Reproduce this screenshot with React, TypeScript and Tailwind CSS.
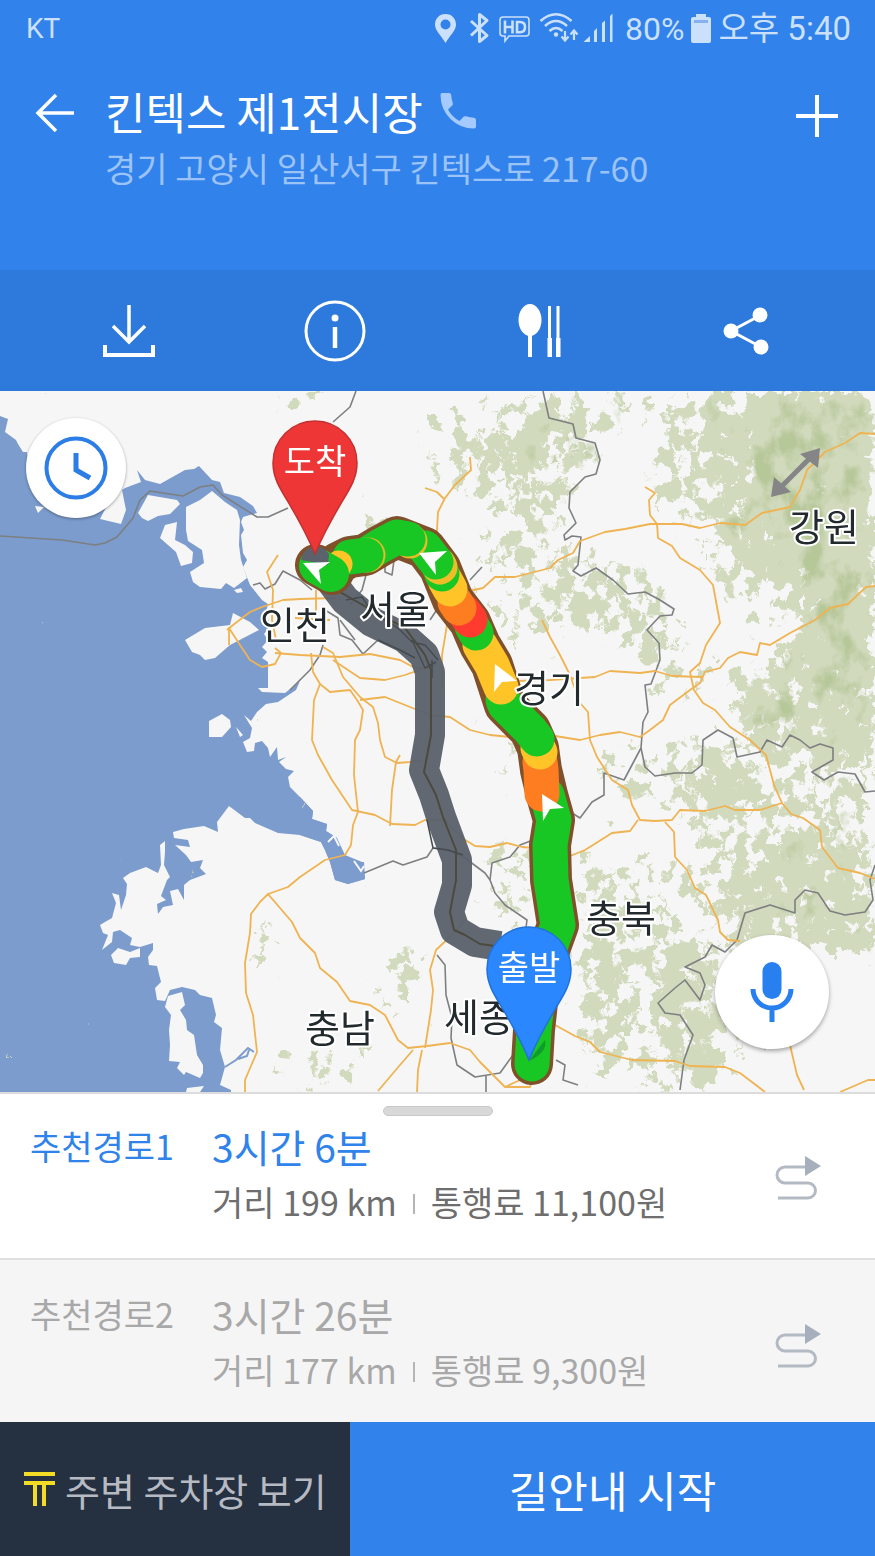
import React from "react";

const LAND = [
  "0,391 0,416 8,419 5,432 16,440 18,444 23,452 27,452 30,480 60,505 100,505 125,488 141,482 137,470 145,480 160,484 185,470 194,469 199,466 212,480 220,482 224,493 240,497 253,506 257,513 243,517 241,522 244,530 241,535 243,553 247,560 243,567 250,585 262,600 268,604 266,612 270,626 264,634 268,640 262,647 267,652 262,658 268,662 268,688 258,688 262,692 285,693 300,681 296,690 278,702 266,704 257,712 251,721 244,715 252,728 250,738 243,742 247,752 254,751 255,743 262,741 268,748 270,757 277,747 278,760 286,757 279,762 286,769 294,771 288,777 290,787 300,797 313,811 312,819 327,824 326,831 337,838 345,855 362,862 365,879 348,884 335,880 330,862 325,850 321,842 300,835 278,833 255,823 250,818 245,818 229,806 217,822 218,832 204,826 184,829 173,832 174,838 188,840 190,847 175,845 186,855 191,862 203,860 200,868 206,874 190,880 184,885 184,900 178,889 170,891 173,905 163,907 158,914 157,904 166,900 161,896 167,880 170,877 164,865 165,852 165,841 160,845 161,865 158,873 146,867 130,873 123,878 127,884 126,895 121,910 119,895 112,893 116,903 112,918 105,922 100,925 103,933 108,935 102,950 112,942 113,932 120,930 132,938 130,945 140,947 153,943 153,950 148,957 149,965 157,966 161,982 155,988 157,1000 165,1001 170,990 182,987 195,990 200,995 212,998 216,1015 214,1022 222,1028 220,1050 225,1067 220,1085 231,1090 231,1092 875,1092 875,391",
  "111,955 118,948 130,952 140,948 140,957 130,958 126,965 114,963",
  "168,996 182,992 185,1005 180,1010 186,1020 187,1030 194,1035 197,1055 203,1065 203,1073 200,1078 186,1072 184,1075 177,1068 180,1062 169,1061 170,1045 169,1030 171,1015 165,1007",
  "186,507 200,500 212,491 225,502 237,510 240,520 239,545 241,560 247,578 238,585 234,588 226,583 221,589 200,587 193,582 190,572 204,563 202,550 188,541 186,530",
  "138,513 148,495 177,500 180,504 170,514 158,516 148,521 142,518",
  "165,525 177,522 175,540 185,545 193,552 192,563 181,566 176,552 160,538",
  "100,519 120,480 126,510 121,524",
  "185,640 205,628 230,625 233,613 250,622 259,630 230,645 215,658 205,660 200,655 192,652",
  "209,721 222,714 230,720 231,727 222,737 209,737",
  "234,590 241,588 243,592 237,593",
  "35,506 44,507 38,513",
  "187,1088 204,1086 200,1092 186,1092",
  "236,727 243,735 240,737",
];

const BAY = "300,797 313,811 312,819 327,824 326,831 337,838 340,857 350,862 364,862 365,879 348,884 335,880 330,862 325,850 321,842 300,835";

// density of the mountain cover, [points, opacity]
const HILLS: [string, number][] = [
  ["700,391 875,391 875,770 745,735 728,690 790,640 805,600 750,560 700,520 725,470 700,430", 0.62],
  ["760,391 875,391 875,740 830,700 800,560 750,500", 0.5],
  ["530,391 660,391 620,425 590,480 560,530 525,540 520,440", 0.45],
  ["530,400 580,400 570,430 545,455 528,440", 0.35],
  ["555,540 640,560 690,610 665,670 600,640 550,610", 0.44],
  ["555,590 600,590 600,620 560,620", 0.4],
  ["650,400 720,400 720,470 690,540 650,500", 0.48],
  ["690,540 760,530 800,600 770,640 720,600", 0.4],
  ["640,650 700,640 760,680 700,700 650,700", 0.3],
  ["600,740 720,740 760,810 660,820 600,800", 0.38],
  ["700,740 875,740 875,960 740,930 700,880 690,800", 0.44],
  ["730,880 790,830 875,860 875,960 720,950", 0.4],
  ["580,880 680,920 720,960 720,1092 640,1092 580,1040", 0.42],
  ["650,930 760,940 770,1060 690,1092 660,1010", 0.35],
  ["570,850 700,850 720,930 640,910 590,930", 0.36],
  ["570,940 620,940 620,1092 580,1092", 0.3],
  ["480,840 540,840 535,930 490,920", 0.4],
  ["380,950 420,940 415,1020 385,1020", 0.46],
  ["330,1050 375,1020 365,1092 330,1092", 0.38],
  ["410,400 525,400 530,480 440,500", 0.34],
  ["470,540 560,540 570,640 500,650", 0.36],
  ["460,440 530,430 540,560 490,560", 0.34],
  ["505,740 530,740 520,800 500,790", 0.42],
  ["275,385 325,385 305,415 255,410", 0.46],
  ["360,515 398,515 398,560 378,560", 0.7],
  ["252,925 280,925 275,985 250,980", 0.46],
  ["285,1075 325,1045 330,1092 285,1092", 0.42],
  ["270,1045 295,1045 285,1070 272,1068", 0.6],
];

const ROADS = [
  "470,457 471,470 455,485 445,498 438,512 437,530 433,545",
  "425,488 437,492 444,499",
  "465,592 483,588 495,577 515,577 550,568 558,560 573,553 580,541 605,532 625,529 650,524 682,524 700,528 720,523 745,525 762,513 790,507 800,490 807,470 825,452 845,443 860,433 875,434",
  "645,487 655,493 649,500 650,515 657,524 658,538 672,546 680,558 700,570 713,585 720,623 706,645 700,663 690,672 694,690 703,703 715,710 730,727 750,740 766,755 774,785 782,803 791,814 803,818 820,830 822,847 838,868 860,873 875,879",
  "875,586 866,587 848,604 830,608 815,620 790,633 770,645 760,643 757,655 740,652 728,658 720,668 705,672 700,683 690,690 670,705 663,720 650,730 640,737 620,732 600,735 580,740 555,736",
  "515,681 550,680 595,677 610,671 640,673 655,671 672,676 702,677",
  "542,620 550,637 560,655 570,675 580,703 588,712 590,740 597,757 612,780 628,790 632,805 640,820 655,821 672,820 680,810 705,811 725,806 735,810 760,810 782,803",
  "570,856 585,850 612,833 630,831 638,820",
  "665,822 674,832 675,857 687,870 695,888 706,895 718,920 720,932 728,940 740,941",
  "555,1025 575,1036 590,1042 600,1052 632,1060 675,1061 690,1066 725,1067 740,1073 765,1092",
  "790,1045 797,1075 804,1090",
  "840,1092 868,1080 875,1080",
  "268,894 288,887 300,877 325,860 345,855 351,845 353,825 358,812 354,775 355,740 360,730 363,710 357,700 350,690 330,692 320,684",
  "245,1092 245,1080 257,1052 253,1015 246,993 245,963 250,933 251,914 260,902 268,894 292,922 300,938 315,953 320,968 337,982 350,1001 370,1005 385,1015 398,1040 408,1048 427,1046 450,1043 470,1050 480,1062 490,1072 505,1087 520,1080",
  "505,1087 530,1087 532,1080",
  "425,1048 431,1010 433,990 430,970 436,950 452,935 465,920",
  "413,1050 400,1065 378,1091",
  "422,1050 418,1070 417,1092",
  "311,653 313,672 320,684 314,700 312,740 318,755 332,780 352,810 375,815 392,824 415,825 425,820 445,820 462,838 475,846 490,847 507,843 522,847 533,848",
  "390,826 392,790 396,762 400,755",
  "380,740 385,757 397,763 410,762 425,760",
  "323,647 333,653 343,677 360,697 373,707 378,723 380,740",
  "275,653 300,655 340,657 370,654 400,660 415,668 430,668",
  "333,660 360,678 385,680 405,675 425,668",
  "360,700 385,697 410,707 430,715 450,717 470,730 490,735 510,737",
  "227,630 233,625 250,612 262,607 283,600 300,599 335,598",
  "278,555 267,572 273,590 272,620 276,640",
  "229,645 229,628 240,645 250,660 262,667 275,664 281,653 275,648",
  "442,690 442,655 447,625 455,610",
  "295,618 330,620",
  "316,590 316,615",
];

const BORDERS = [
  "0,536 62,540 95,545 105,543 117,537 133,518 140,500 150,491 183,496 200,487 213,485 222,495 257,517 268,517 288,508",
  "356,391 350,407 333,422",
  "543,391 549,418 573,424 576,438 595,443 600,460 596,474 585,477 570,492 569,508 576,523 564,535 565,540 572,536 581,537 578,565 573,571 581,576 596,568 613,580 628,594 645,592 660,600 674,609 672,615 660,616 647,630 659,643 660,660 651,684 645,685 648,712 643,722 641,748 624,780 604,773 604,795 592,802 580,818 572,813",
  "641,748 645,767 655,776 675,773 692,773 702,765 703,740 718,730 733,738 737,757 760,752 767,740 782,747 790,735 800,740 810,748 820,744 833,748 833,760 812,772 824,780 838,772 855,774 865,792 875,791",
  "875,865 870,880 873,900 865,912 845,915 830,911 818,893 805,890 795,900 795,913 770,905 745,913 737,940 725,952 712,945 705,957 685,967 700,973 705,985 700,1000 685,980 675,988 658,1003 665,1013 680,1015 693,1035 684,1060 680,1090",
  "364,873 393,861 403,865 427,857 433,848 448,850 465,858 485,873 490,880 495,893 505,905 527,920 525,935",
  "490,880 492,863 510,857 520,845 533,840",
  "437,955 445,965 446,995 452,1018 451,1038 457,1065 475,1077 500,1073 513,1055",
  "486,1076 486,1092",
  "556,1060 565,1065 563,1080 578,1085",
  "253,585 260,583 265,589 275,584 283,571 300,580 312,590",
  "323,645 320,655 310,670 290,690",
  "325,610 338,618 340,635 352,640 363,654 378,640",
  "350,605 362,590 366,575 366,560",
  "385,560 385,572 392,575 394,560",
  "340,620 355,640",
  "430,620 440,605 445,590 430,575",
  "470,580 482,567",
];

const ROUTE =
  "M532 1064 L534 1030 L540 975 L558 925 L551 880 L550 845 L554 820 L547 795 L541 770 L538 748 L530 730 L505 705 L492 665 L480 645 L470 622 L453 600 L440 568 L425 548 L397 537 L380 546 L365 555 L350 557 L338 563 L332 574 L316 565";

const SEGMENTS: [string, string][] = [
  ["M532 1064 L534 1030 L540 975 L558 925 L551 880 L550 845 L554 820 L547 795", "#18c724"],
  ["M542 794 L541 770 L540 762", "#ff7d21"],
  ["M540 752 L538 748", "#ffc528"],
  ["M537 739 L530 730 L505 705 L503 700", "#18c724"],
  ["M501 687 L492 665 L480 645", "#ffc528"],
  ["M476 633 L472 626", "#18c724"],
  ["M470 620 L464 612", "#ff3b30"],
  ["M459 608 L455 602", "#ff7d21"],
  ["M450 589 L445 580", "#ffc528"],
  ["M442 574 L439 566", "#18c724"],
  ["M440 567 L438 564", "#f0bd28"],
  ["M436 562 L425 548", "#18c724"],
  ["M410 541 L409 540", "#e6bc28"],
  ["M408 539 L397 537 L380 546 L369 553", "#18c724"],
  ["M368 555 L367 555", "#e6bc28"],
  ["M366 555 L350 557", "#18c724"],
];

const ARROWS = [
  "303,563 330,562 319,570 321,584",
  "419,553 447,551 435,562 436,575",
  "495,664 517,681 502,682 494,692",
  "542,794 564,808 550,809 543,821",
];

const REGIONS = [
  { name: "인천", x: 260, y: 639 },
  { name: "서울", x: 360, y: 623 },
  { name: "경기", x: 514, y: 702 },
  { name: "강원", x: 789, y: 541 },
  { name: "충북", x: 586, y: 932 },
  { name: "충남", x: 305, y: 1042 },
  { name: "세종", x: 444, y: 1031 },
];

const Pin = ({ x, y, fill, edge, label }: { x: number; y: number; fill: string; edge: string; label: string }) => (
  <g transform={`translate(${x} ${y})`}>
    <path
      d="M0 0 C-9 -22 -18 -37 -28 -54 C-36 -67 -42 -77 -42 -91 A42 42 0 0 1 42 -91 C42 -77 36 -67 28 -54 C18 -37 9 -22 0 0 Z"
      fill={fill}
      stroke={edge}
      strokeWidth="1.5"
    />
    <text y="-80" textAnchor="middle" fontSize="34" fill="#fff">
      {label}
    </text>
  </g>
);

const RouteMap = () => (
  <svg
    viewBox="0 391 875 701"
    className="block w-full"
    role="img"
    aria-label="경로 지도"
    fontFamily='"Noto Sans CJK KR", sans-serif'
  >
    <defs>
      <filter id="cover" filterUnits="userSpaceOnUse" x="0" y="391" width="875" height="701" colorInterpolationFilters="sRGB">
        <feGaussianBlur in="SourceAlpha" stdDeviation="10" result="density" />
        <feTurbulence type="fractalNoise" baseFrequency="0.075 0.06" numOctaves="5" seed="7" result="noise" />
        <feComposite in="density" in2="noise" operator="arithmetic" k1="0" k2="0.9" k3="1" k4="-0.4" result="sum" />
        <feColorMatrix in="sum" values="0 0 0 0 0.82  0 0 0 0 0.855  0 0 0 0 0.74  0 0 0 18 -8.6" result="flat" />
        <feTurbulence type="fractalNoise" baseFrequency="0.12" numOctaves="2" seed="3" result="jag" />
        <feDisplacementMap in="flat" in2="jag" scale="14" xChannelSelector="R" yChannelSelector="G" />
      </filter>
      <filter id="ridge" filterUnits="userSpaceOnUse" x="0" y="391" width="875" height="701" colorInterpolationFilters="sRGB">
        <feGaussianBlur in="SourceAlpha" stdDeviation="14" result="density" />
        <feTurbulence type="fractalNoise" baseFrequency="0.04 0.03" numOctaves="5" seed="21" result="noise" />
        <feComposite in="density" in2="noise" operator="arithmetic" k1="0" k2="0.6" k3="1" k4="-0.45" />
        <feColorMatrix values="0 0 0 0 0.69  0 0 0 0 0.76  0 0 0 0 0.56  0 0 0 4 -1.9" />
      </filter>
    </defs>

    <rect y="391" width="875" height="701" fill="#7b9ccd" />
    {LAND.map((p) => (
      <polygon key={p} points={p} fill="#f6f6f6" />
    ))}
    <polygon points={BAY} fill="#7b9ccd" />
    <path d="M328 842 L334 836 L339 846 M354 861 L361 871 L364 866" fill="none" stroke="#f6f6f6" strokeWidth="2" />
    <path d="M225 1067 L236 1060 L248 1048 L254 1052 M238 1059 L247 1056 L249 1050" fill="none" stroke="#7b9ccd" strokeWidth="2" />

    <g filter="url(#cover)">
      {HILLS.map(([p, o]) => (
        <polygon key={p} points={p} opacity={o} />
      ))}
    </g>
    <g filter="url(#ridge)" opacity="0.8">
      {HILLS.slice(0, 5).map(([p, o]) => (
        <polygon key={p} points={p} opacity={o} />
      ))}
      <polygon points="760,850 875,780 875,950 740,930" opacity="0.5" />
      <polygon points="660,940 750,950 740,1040 670,1010" opacity="0.3" />
    </g>

    <g fill="none" stroke="#7d7f80" strokeWidth="1.6" strokeLinejoin="round">
      {BORDERS.map((p) => (
        <polyline key={p} points={p} />
      ))}
    </g>
    <g fill="none" stroke="#efb351" strokeWidth="1.8" strokeLinejoin="round">
      {ROADS.map((p) => (
        <polyline key={p} points={p} />
      ))}
    </g>

    <g fill="none" strokeLinejoin="round">
      <path
        d="M330 580 L345 600 L372 622 L405 638 L424 655 L430 672 L430 735 L424 770 L434 795 L441 817 L457 860 L457 885 L449 912 L455 930 L475 942 L500 946"
        stroke="#5b626c"
        strokeWidth="30"
        opacity="0.96"
      />
      <path
        d="M340 592 L375 612 L405 628 L425 655 L431 670 L431 735 L424 772 L436 795 L443 817 L456 850 L456 880 L450 912 L454 930 L465 935 L480 944 L495 946"
        stroke="#4b4a3d"
        strokeWidth="2"
      />
      <path
        d="M346 600 L362 597 L372 612 L398 628 L412 642 L425 645 L438 660 M378 640 L400 650 L415 658 M412 640 L425 668 L436 662 M432 660 L432 678"
        stroke="#464b4e"
        strokeWidth="1.5"
      />
      <path d="M427 820 L433 848 L448 850 L463 855" stroke="#464b4e" strokeWidth="1.5" />
    </g>

    <g fill="none" strokeLinecap="round" strokeLinejoin="round">
      <path d={ROUTE} stroke="#80502a" strokeWidth="42" />
      {SEGMENTS.map(([d, color]) => (
        <path key={d} d={d} stroke={color} strokeWidth="35" />
      ))}
      <path d="M339 564 L334 572" stroke="#ffc528" strokeWidth="27" />
      <path d="M331 574 L317 566" stroke="#18c724" strokeWidth="36" />
    </g>
    <path d="M301 560 A15 15 0 0 1 329 554 L328 565 Z" fill="#5b626c" />
    {ARROWS.map((p) => (
      <polygon key={p} points={p} fill="#fff" />
    ))}
    <path d="M529 1061 L545 1040 Q548 1052 529 1061 Z" fill="#0c7d2f" opacity="0.6" />

    <g fill="#222a2d" stroke="#fff" strokeWidth="4" paintOrder="stroke" strokeLinejoin="round" fontSize="38">
      {REGIONS.map((r) => (
        <text key={r.name} x={r.x} y={r.y}>
          {r.name}
        </text>
      ))}
    </g>

    <Pin x={315} y={554} fill="#ee3636" edge="#c33030" label="도착" />
    <Pin x={529} y={1060} fill="#2a87fd" edge="#2272dc" label="출발" />
  </svg>
);

const StatusIcons = () => (
  <svg width="184" height="34" viewBox="430 12 184 34" className="shrink-0" fill="#cbe0fb" aria-hidden="true">
    <path fillRule="evenodd" d="M441.500 14 C435 14 431 19 431 24.500 C431 31 437 35 441.500 43 C446 35 452 31 452 24.500 C452 19 448 14 441.500 14 Z M441.500 19.500 a5 5 0 1 1 0 10 a5 5 0 1 1 0 -10 Z" />
    <path d="M467 21 L483 35.500 L475.500 41.500 V14.500 L483 20.500 L467 35.500" fill="none" stroke="#cbe0fb" strokeWidth="3" strokeLinejoin="round" />
    <path d="M499 17 H522 Q525 17 525 20 V33 Q525 36 522 36 H505 L501 41 V36 H499 Q496 36 496 33 V20 Q496 17 499 17 Z" fill="none" stroke="#cbe0fb" strokeWidth="1.6" />
    <path d="M501 20.500 V33.500 M508.500 20.500 V33.500 M501 27 H508.500 M513 22 V32.200 H516 Q521 32.200 521 27 Q521 22 516 22 Z" fill="none" stroke="#cbe0fb" strokeWidth="2.600" />
    <g fill="none" stroke="#cbe0fb" strokeWidth="2.600">
      <path d="M536.500 21 Q552 7.500 567.500 21" />
      <path d="M541 26 Q552 16 563 26" />
      <path d="M545.500 31 Q552 25 558.500 31" />
      <path d="M561 31 V40 M557.500 36.500 L561 40.500 L564.500 36.500 M570 40 V31 M566.500 34.500 L570 30.500 L573.500 34.500" strokeWidth="2.200" />
    </g>
    <circle cx="552" cy="34.500" r="2.200" />
    <path d="M579.500 42 L586 36 V42 Z M590 42 V31 L593 28 V42 Z M598 42 V23 L601 20.500 V42 Z M606 42 V16 L608.500 13.500 V42 Z" />
  </svg>
);

const BackIcon = () => (
  <svg width="42" height="42" viewBox="0 0 42 42" fill="none" stroke="#fff" strokeWidth="3.500">
    <path d="M40 21 H4 M22 3 L4 21 L22 39" />
  </svg>
);

const PhoneIcon = () => (
  <svg width="38" height="38" viewBox="0 0 38 38" fill="#a5caff">
    <path d="M3 1 H10 Q12 1 12.200 3 Q12.500 7.500 13.800 11 Q14.300 12.500 13.200 13.600 L9 17.500 Q13 25 20.500 29 L24.500 24.800 Q25.600 23.800 27 24.300 Q31 25.600 35 25.800 Q37 26 37 28 V34.500 Q37 36.500 35 36.500 Q21 36.500 11.500 27 Q1.500 17 1.500 3 Q1.500 1 3 1 Z" />
  </svg>
);

const PlusIcon = () => (
  <svg width="42" height="42" viewBox="0 0 42 42" fill="none" stroke="#fff" strokeWidth="4">
    <path d="M0 21 H42 M21 0 V42" />
  </svg>
);

const DownloadIcon = () => (
  <svg width="52" height="54" viewBox="0 0 52 54" fill="none" stroke="#fff">
    <path d="M26 1 V38 M10 22 L26 38 L42 22" strokeWidth="3.500" />
    <path d="M2 41 V51 H50 V41" strokeWidth="4" />
  </svg>
);

const InfoIcon = () => (
  <svg width="62" height="62" viewBox="0 0 62 62" fill="none" stroke="#fff">
    <circle cx="31" cy="31" r="29" strokeWidth="3" />
    <circle cx="31" cy="18" r="3.500" fill="#fff" stroke="none" />
    <path d="M31 27 V48" strokeWidth="4.500" />
  </svg>
);

const FoodIcon = () => (
  <svg width="44" height="54" viewBox="0 0 44 54" fill="#fff">
    <ellipse cx="12" cy="16" rx="11.500" ry="16" />
    <path d="M10 30 H14 V53 H10 Z M30 2 H33 V34 H34 V53 H29.500 V34 H30 Z M38.500 2 H41.500 V34 H42.500 V53 H38 V34 H38.500 Z" />
  </svg>
);

const ShareIcon = () => (
  <svg width="46" height="48" viewBox="0 0 46 48" fill="#fff">
    <path d="M38 8 L8 24 L38 40" fill="none" stroke="#fff" strokeWidth="3" />
    <circle cx="37" cy="8" r="7.500" />
    <circle cx="8" cy="24" r="7.500" />
    <circle cx="38" cy="40" r="7.500" />
  </svg>
);

const RouteIcon = () => (
  <svg width="48" height="46" viewBox="0 0 48 46" className="mt-2 shrink-0">
    <path d="M32 12 H11 A8 8 0 0 0 11 28 H34 A7.500 7.500 0 0 1 34 43 H4" fill="none" stroke="#b3bac3" strokeWidth="3" />
    <path d="M31 1 L47 11 L31 21 Z" fill="#a6afbb" />
  </svg>
);

const ACTIONS = [
  { label: "저장", icon: <DownloadIcon /> },
  { label: "정보", icon: <InfoIcon /> },
  { label: "맛집", icon: <FoodIcon /> },
  { label: "공유", icon: <ShareIcon /> },
];

const App = () => {
  return (
    <main className="w-full bg-white font-['Noto_Sans_CJK_KR',sans-serif]">
      <header className="bg-[#3182ea] text-white">
        <div className="flex h-[58px] items-center justify-between pl-[26px] pr-6 text-[33px] text-[#cbe0fb] font-[Roboto,'Noto_Sans_CJK_KR',sans-serif]">
          <span className="text-[28px]">KT</span>
          <div className="flex items-center gap-[7px]">
            <StatusIcons />
            <span className="text-[32px]">80%</span>
            <svg width="20" height="30" viewBox="0 0 20 30" fill="#cbe0fb" aria-hidden="true">
              <path d="M5 0 H15 V3 H18 Q20 3 20 5 V27 Q20 29 18 29 H2 Q0 29 0 27 V5 Q0 3 2 3 H5 Z" />
              <path d="M3 6 H17 V9 H3 Z" fill="#85b1ee" />
            </svg>
            <span className="whitespace-nowrap">오후 5:40</span>
          </div>
        </div>

        <div className="flex items-start pt-6 pb-[74px] pl-[34px] pr-[37px]">
          <button aria-label="뒤로" className="flex h-[62px] w-[71px] items-center">
            <BackIcon />
          </button>
          <div className="min-w-0 flex-1">
            <div className="flex items-center gap-4">
              <h1 className="text-[44px] leading-[58px]">킨텍스 제1전시장</h1>
              <a href="tel:" aria-label="전화">
                <PhoneIcon />
              </a>
            </div>
            <p className="text-[34px] leading-[56px] text-[#9bc3f8]">경기 고양시 일산서구 킨텍스로 217-60</p>
          </div>
          <button aria-label="추가" className="flex h-[68px] items-center">
            <PlusIcon />
          </button>
        </div>

        <nav className="grid h-[121px] grid-cols-4 bg-[#2d7adc] px-[26px]">
          {ACTIONS.map((a) => (
            <button key={a.label} aria-label={a.label} className="flex items-center justify-center">
              {a.icon}
            </button>
          ))}
        </nav>
      </header>

      <section className="relative">
        <RouteMap />
        <button
          aria-label="시간 설정"
          className="absolute left-[26px] top-[27px] flex size-[100px] items-center justify-center rounded-full bg-white shadow-[0_1px_3px_rgba(0,0,0,0.35)]"
        >
          <svg width="64" height="64" viewBox="0 0 64 64" fill="none" stroke="#2d7de6">
            <circle cx="32" cy="32" r="29.500" strokeWidth="4" />
            <path d="M32 17 V34 L46 42" strokeWidth="5" />
          </svg>
        </button>
        <button aria-label="지도 확대" className="absolute right-[54px] top-[57px]">
          <svg width="50" height="50" viewBox="0 0 50 50" fill="#858587">
            <path d="M10 39 L39 10" stroke="#858587" strokeWidth="5" />
            <path d="M49 0 L29 6 L47 20 Z M0 49 L3 29 L20 44 Z" />
          </svg>
        </button>
        <button
          aria-label="음성 검색"
          className="absolute bottom-[43px] right-[46px] flex size-[114px] items-center justify-center rounded-full bg-white shadow-[0_2px_4px_rgba(0,0,0,0.35)]"
        >
          <svg width="44" height="60" viewBox="0 0 44 60">
            <rect x="12.500" y="0" width="19" height="37" rx="9.500" fill="#277ff0" />
            <path d="M3 27 A19 19 0 0 0 41 27 M22 46 V60" fill="none" stroke="#277ff0" strokeWidth="5" />
          </svg>
        </button>
      </section>

      <section className="border-t-2 border-[#dcdcdc] bg-white pt-3">
        <div className="mx-auto h-[10px] w-[110px] rounded-full border border-[#c9c9c9] bg-[#d8d8d8]" />
        <button className="flex w-full items-center pb-[28px] pl-[30px] pr-[53px] pt-[2px] text-left">
          <span className="w-[182px] self-start text-[34px] leading-[56px] text-[#2f83ea]">추천경로1</span>
          <span className="flex-1">
            <span className="block text-[39px] leading-[56px] text-[#2f83ea]">3시간 6분</span>
            <span className="flex items-center text-[34px] leading-[56px] text-[#6e6e6e]">
              거리 199 km
              <span className="mx-4 mt-1 h-[20px] w-[2px] bg-[#b5b5b5]" />
              통행료 11,100원
            </span>
          </span>
          <RouteIcon />
        </button>
      </section>

      <section className="border-t-2 border-[#e0e0e0] bg-[#f5f5f5]">
        <button className="flex w-full items-center pb-6 pl-[30px] pr-[53px] pt-[26px] text-left text-[#a8a8a8]">
          <span className="w-[182px] self-start text-[34px] leading-[56px]">추천경로2</span>
          <span className="flex-1">
            <span className="block text-[39px] leading-[56px]">3시간 26분</span>
            <span className="flex items-center text-[34px] leading-[56px]">
              거리 177 km
              <span className="mx-4 mt-1 h-[20px] w-[2px] bg-[#b5b5b5]" />
              통행료 9,300원
            </span>
          </span>
          <RouteIcon />
        </button>
      </section>

      <footer className="flex h-[134px]">
        <button className="flex w-2/5 items-center gap-[10px] whitespace-nowrap bg-[#253040] pl-6 text-[38px] text-[#b6bac3]">
          <svg width="31" height="34" viewBox="0 0 31 34" fill="#f3dd24" className="shrink-0">
            <path d="M0 0 H31 V4 H0 Z M0 9 H31 V13 H22 V34 H18 V13 H13 V34 H9 V13 H0 Z" />
          </svg>
          주변 주차장 보기
        </button>
        <button className="w-3/5 bg-[#3182ea] text-[43px] text-white">길안내 시작</button>
      </footer>
    </main>
  );
};

export default App;
